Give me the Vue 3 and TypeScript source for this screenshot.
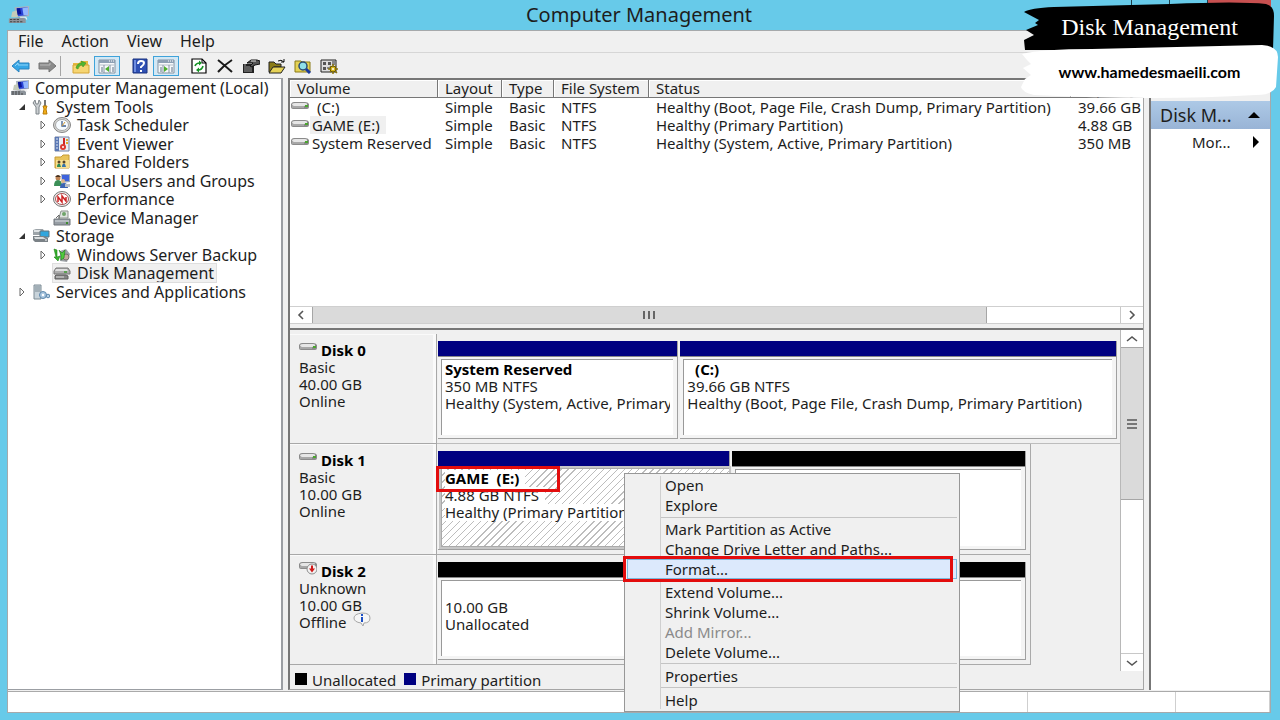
<script setup lang="ts">
interface TreeNode { label: string; level: number; icon: string; state?: 'open' | 'closed'; selected?: boolean }
interface Volume { name: string; status: string; capacity: string; selected?: boolean; indent?: boolean }
interface Part { grow: number; kind: 'primary' | 'free'; title?: string; lines: string[]; hatched?: boolean }
interface Disk { name: string; icon: string; info: string[]; span: number; notice?: boolean; parts: Part[] }
interface Tool { icon: string; label: string; on?: boolean; sep?: boolean; space?: boolean }

const computer =
  '<path d="M5 1l13-1v9l-12 1z" fill="#a9b4bf"/><path d="M7 2l10-1v7l-9 1z" fill="#2b46d8"/><path d="M12 2l5-1v7l-4 0z" fill="#93b7ff"/><path d="M7 2l3 0 1 5-4 1z" fill="#0a1596"/><path d="M3 5l4-1 1 6H2z" fill="#c4cbb9"/><path d="M0 11l13-1 2 2v3H0z" fill="#8d949b"/><path d="M1 12h9M1 14h12" stroke="#444" stroke-width="1" stroke-dasharray="2 1"/><path d="M10 10h5l1 2" stroke="#eee" fill="none"/>'
const drive =
  '<path d="M0 6q1-2 3-2h11q3 0 4 2v3q0 2-2 2H2q-2 0-2-2z" fill="#8b8b8b"/><path d="M1 6q1-1 3-1h10q2 0 2 1v1q-1 1-3 1H3q-2 0-2-2z" fill="#e6e6e6"/><path d="M1 9h12" stroke="#c4c4c4"/><rect x="14" y="7" width="3" height="2" fill="#4aa52e"/>'
const panel = (arrow: string) =>
  `<path d="M1 2h16v13H1z" fill="#f7f9fb" stroke="#8593a2"/><path d="M1 2h16v3H1z" fill="#8da0b4"/><path d="M11 3h1M13 3h1M15 3h1" stroke="#fff"/><path d="M2 7h14" stroke="#b5bfca"/><path d="M3 9h2v5H3zM14 9h2v5h-2z" fill="#aab5c1"/><path d="M6 7v8M12 7v8" stroke="#8593a2"/>${arrow}`

const icons: Record<string, string> = {
  computer,
  drive,
  back: '<path d="M0 8l7-6v3h10v6H7v3z" fill="#35a6e6" stroke="#2b82bd"/><path d="M3 8l3-3v2h10" fill="none" stroke="#8ed4f8"/>',
  forward: '<path d="M18 8l-7-6v3H1v6h10v3z" fill="#8b8b8b" stroke="#747474"/><path d="M2 7h10V5" fill="none" stroke="#b9b9b9"/>',
  up: '<path d="M1 5h6l2-2h7v12H1z" fill="#e7b93f"/><path d="M1 7h16v8H1z" fill="#f6d572" stroke="#d5a537"/><path d="M4 10q1-5 6-5l-1-2 5 2-3 4-1-2q-3 0-4 4z" fill="#51b732" stroke="#2f8c1c" stroke-width=".5"/>',
  panelLeft: panel('<path d="M11 8v6l-4-3z" fill="#4caf2c"/>'),
  panelRight: panel('<path d="M7 8v6l4-3z" fill="#4caf2c"/>'),
  help: '<path d="M2 1h14v14H2z" fill="#2f50b4" stroke="#19307e"/><path d="M3 2h2v12H3z" fill="#6e8de0"/><path d="M7 6q0-3 3-3t3 2q0 2-3 4v1M10 12v2" fill="none" stroke="#fff" stroke-width="2"/>',
  refresh: '<path d="M2 1h10l4 4v10H2z" fill="#fff" stroke="#000" stroke-width="1.2"/><path d="M12 1v4h4" fill="none" stroke="#000"/><path d="M5 8q1-3 5-3M13 8q-1 4-5 4" fill="none" stroke="#159425" stroke-width="1.6"/><path d="M9 2.500l3 2.500-3 2.500zM9 9.500l-3 2.500 3 2.500z" fill="#159425"/>',
  cross: '<path d="M2 2q5 4 14 12M16 2q-8 5-14 12" fill="none" stroke="#1a1a1a" stroke-width="2"/>',
  properties: '<path d="M1 6h11v9H1z" fill="#222"/><path d="M2 7h2M2 9h8M2 11h8M2 13h8" stroke="#999"/><path d="M5 5l4-3h6l3 1v3l-5 1-3 2-2-1 3-3H7z" fill="#555" stroke="#111"/><path d="M9 3h5" stroke="#ddd"/>',
  open: '<path d="M1 4h5l2 2h5v3H6l-4 5H1z" fill="#8a7b16" stroke="#222"/><path d="M5 9h12l-4 6H1z" fill="#e6d257" stroke="#222"/><path d="M10 3q3-2 6 1M16 1v3h-3" fill="none" stroke="#111"/>',
  search: '<path d="M1 3h6l1 1h8v10H1z" fill="#e5d255" stroke="#8a7b16"/><circle cx="9" cy="8" r="4" fill="#8fe0ea" stroke="#2c4d74" stroke-width="1.5"/><path d="M12 11l4 4" stroke="#183a9d" stroke-width="3"/>',
  settings: '<path d="M1 2h15v12H1z" fill="#ddd" stroke="#222"/><path d="M3 4h3v3H3zM3 9h3v3H3zM8 4h3v3H8z" fill="#555"/><path d="M12 4h3M12 6h3M7 10h3" stroke="#333"/><circle cx="13" cy="11" r="3" fill="#d8b81c" stroke="#5d4e08"/><path d="M13 6v2M13 14v2M8 11h2M16 11h2M10 8l1 1M15 13l2 2M16 8l-1 1M10 14l1-1" stroke="#8a760d" stroke-width="1.5"/><circle cx="13" cy="11" r="1" fill="#fff"/>',
  tools: '<path d="M3 1l1 4 2 0 1-4 2 3-2 4v7H4V8L1 4z" fill="#ccd0d3" stroke="#7d8488"/><path d="M12 1h2v6h-2z" fill="#777"/><path d="M11 7h4l-1 3 1 5h-4l1-5z" fill="#f1ae18" stroke="#bb7c05"/>',
  clock: '<ellipse cx="9" cy="8" rx="8.500" ry="7.500" fill="#d5d5d2" stroke="#858585"/><ellipse cx="9" cy="8" rx="6.500" ry="5.500" fill="#f6fbff" stroke="#a8a8a8"/><path d="M9 4v5h4" fill="none" stroke="#3f5f8e" stroke-width="1.3"/><path d="M9 9l3-4" stroke="#d79b34"/>',
  event: '<path d="M2 1h14v14H2z" fill="#e8edf3" stroke="#7281a2"/><path d="M2 1h4v14H2z" fill="#5b78b4"/><path d="M3 3h2M3 6h2M3 9h2M3 12h2" stroke="#dfe7f5"/><path d="M11 2v7" stroke="#d02525" stroke-width="2"/><circle cx="10" cy="11" r="3" fill="#dd3a31"/><circle cx="10" cy="11" r="1" fill="#fff"/><path d="M13 4h2M13 7h2" stroke="#e0a92b" stroke-width="2"/>',
  shared: '<path d="M2 3h6l2-2h6v13H2z" fill="#e9c45a" stroke="#c69a35"/><path d="M3 6h13v8H3z" fill="#f8df90"/><circle cx="6" cy="8" r="1.5" fill="#5a4627"/><path d="M4 13q0-4 3-3l1 3z" fill="#2e8d56"/><circle cx="11" cy="8" r="1.5" fill="#5a4627"/><path d="M9 13q0-4 3-3l1 3z" fill="#3573ac"/>',
  users: '<path d="M8 1l9 0v8l-8 1z" fill="#9ba8bd"/><path d="M9 2h7v6H9z" fill="#3e63dc"/><circle cx="5" cy="5" r="2.5" fill="#bd8455"/><path d="M2 4q3-4 6 0" fill="#4b321d"/><path d="M1 13q0-6 4-6t4 6z" fill="#3b8f57"/><circle cx="10" cy="8" r="2" fill="#e0b58b"/><path d="M7 15q0-5 4-5t4 5z" fill="#3c64b3"/><path d="M12 11h5v3h-5z" fill="#b9bec6"/>',
  perf: '<ellipse cx="9" cy="8" rx="8.500" ry="7.500" fill="#ececec" stroke="#777"/><ellipse cx="9" cy="8" rx="6.500" ry="5.500" fill="#fff" stroke="#a55"/><path d="M5 11V6l4 5V5l4 5V6" fill="none" stroke="#cf2525" stroke-width="1.500"/>',
  device: '<path d="M1 9h16v6H1z" fill="#969da4" stroke="#6e757b"/><path d="M2 11h14" stroke="#d8dde1"/><path d="M8 1h7v7H6z" fill="#dfe3e0" stroke="#8b918d"/><circle cx="11" cy="4" r="2" fill="#6fa369"/><path d="M3 8l3-3v4" fill="none" stroke="#666"/><path d="M13 13h2" stroke="#3d8c30" stroke-width="2"/>',
  storage: '<path d="M1 2l3-1h7l1 2v4H1z" fill="#9ca3a8"/><path d="M2 2h7v2H2z" fill="#dee2e4"/><path d="M8 3h9v6H8z" fill="#32a6dd" stroke="#60747f"/><path d="M1 8h11l4 2v4H3l-2-2z" fill="#7b8287"/><path d="M2 9h9l3 2H3z" fill="#d8dcde"/><path d="M13 12h2" stroke="#fff"/>',
  backup: '<path d="M7 4l6-2 4 5-3 8-7-1z" fill="#9ca1a6"/><circle cx="13" cy="10" r="3" fill="#c4a7a1" stroke="#77706e"/><path d="M1 2l3 1v7l3-1-2 5-4-4 2 0z" fill="#34b32a" stroke="#207f19" stroke-width=".6"/><path d="M6 3l3 3 3-3-1 8-3 2V8z" fill="#50cb3e" stroke="#207f19" stroke-width=".6"/>',
  diskmgmt: '<path d="M3 3h12l2 3v3H1V6z" fill="#adadad" stroke="#777"/><path d="M3 4h11l1 2H2z" fill="#e0e0e0"/><path d="M3 10h10l2 1v3H2v-3z" fill="#858585" stroke="#5f5f5f"/><path d="M3 12h8" stroke="#ddd"/><path d="M11 7h3" stroke="#3f9d35" stroke-width="1.5"/>',
  services: '<path d="M2 1h7v14H2z" fill="#c8d3da" stroke="#7d8b94"/><path d="M3 3h5M3 5h5M3 7h5" stroke="#7d8b94"/><circle cx="11" cy="11" r="3.5" fill="#a9c6df" stroke="#5c87ac"/><circle cx="11" cy="11" r="1.2" fill="#fff"/><circle cx="16" cy="12" r="1.8" fill="#b6cfe3" stroke="#5c87ac"/>',
  driveOff:
    '<g transform="translate(0 -2)">' + drive + '</g><circle cx="13" cy="9" r="5" fill="#f2f2f2" stroke="#8d8d8d"/><path d="M13 5.500v4" stroke="#d01a1a" stroke-width="2"/><path d="M10 8.500h6l-3 4z" fill="#d01a1a"/>',
  info: '<path d="M9 1q8 0 8 5t-6 5l-1 3-2-3Q1 10 1 6t8-5z" fill="#f6f6f6" stroke="#a7a7a7"/><path d="M9 5v5" stroke="#1c4fc4" stroke-width="2"/><path d="M9 2v2" stroke="#1c4fc4" stroke-width="2"/>',
}

const tools: Tool[] = [
  { icon: 'back', label: 'Back' },
  { icon: 'forward', label: 'Forward', sep: true },
  { icon: 'up', label: 'Up one level' },
  { icon: 'panelLeft', label: 'Show or hide console tree', on: true, space: true },
  { icon: 'help', label: 'Help' },
  { icon: 'panelRight', label: 'Show or hide action pane', on: true, space: true },
  { icon: 'refresh', label: 'Refresh' },
  { icon: 'cross', label: 'Delete' },
  { icon: 'properties', label: 'Properties' },
  { icon: 'open', label: 'Open' },
  { icon: 'search', label: 'Explore' },
  { icon: 'settings', label: 'Settings' },
]

const tree: TreeNode[] = [
  { label: 'Computer Management (Local)', level: 0, icon: 'computer' },
  { label: 'System Tools', level: 1, icon: 'tools', state: 'open' },
  { label: 'Task Scheduler', level: 2, icon: 'clock', state: 'closed' },
  { label: 'Event Viewer', level: 2, icon: 'event', state: 'closed' },
  { label: 'Shared Folders', level: 2, icon: 'shared', state: 'closed' },
  { label: 'Local Users and Groups', level: 2, icon: 'users', state: 'closed' },
  { label: 'Performance', level: 2, icon: 'perf', state: 'closed' },
  { label: 'Device Manager', level: 2, icon: 'device' },
  { label: 'Storage', level: 1, icon: 'storage', state: 'open' },
  { label: 'Windows Server Backup', level: 2, icon: 'backup', state: 'closed' },
  { label: 'Disk Management', level: 2, icon: 'diskmgmt', selected: true },
  { label: 'Services and Applications', level: 1, icon: 'services', state: 'closed' },
]

const volumes: Volume[] = [
  { name: '(C:)', indent: true, status: 'Healthy (Boot, Page File, Crash Dump, Primary Partition)', capacity: '39.66 GB' },
  { name: 'GAME (E:)', selected: true, status: 'Healthy (Primary Partition)', capacity: '4.88 GB' },
  { name: 'System Reserved', status: 'Healthy (System, Active, Primary Partition)', capacity: '350 MB' },
]

const disks: Disk[] = [
  {
    name: 'Disk 0', icon: 'drive', info: ['Basic', '40.00 GB', 'Online'], span: 100,
    parts: [
      { grow: 240, kind: 'primary', title: 'System Reserved', lines: ['350 MB NTFS', 'Healthy (System, Active, Primary Partition)'] },
      { grow: 437, kind: 'primary', title: '\u00a0\u00a0(C:)', lines: ['39.66 GB NTFS', 'Healthy (Boot, Page File, Crash Dump, Primary Partition)'] },
    ],
  },
  {
    name: 'Disk 1', icon: 'drive', info: ['Basic', '10.00 GB', 'Online'], span: 87.4,
    parts: [
      { grow: 292, kind: 'primary', title: 'GAME\u00a0 (E:)', hatched: true, lines: ['4.88 GB NTFS', 'Healthy (Primary Partition)'] },
      { grow: 295, kind: 'free', lines: [] },
    ],
  },
  {
    name: 'Disk 2', icon: 'driveOff', info: ['Unknown', '10.00 GB', 'Offline'], span: 87.4, notice: true,
    parts: [{ grow: 1, kind: 'free', title: '\u00a0', lines: ['10.00 GB', 'Unallocated'] }],
  },
]

const menuGroups: string[][] = [
  ['Open', 'Explore'],
  ['Mark Partition as Active', 'Change Drive Letter and Paths...', 'Format...'],
  ['Extend Volume...', 'Shrink Volume...', 'Add Mirror...', 'Delete Volume...'],
  ['Properties'],
  ['Help'],
]
</script>

<template>
  <div class="desktop">
    <header class="titlebar">
      <svg class="icon app" viewBox="0 0 18 16" v-html="icons.computer" />
      <h1>Computer Management</h1>
      <div class="controls">
        <button aria-label="Minimize" />
        <button aria-label="Maximize" />
        <button class="close" aria-label="Close" />
      </div>
    </header>

    <div class="window">
      <nav class="menubar">
        <button v-for="m in ['File', 'Action', 'View', 'Help']" :key="m">{{ m }}</button>
      </nav>
      <div class="toolbar">
        <button v-for="t in tools" :key="t.icon" :class="{ on: t.on, sep: t.sep, space: t.space }" :aria-label="t.label">
          <svg class="icon" viewBox="0 0 18 16" v-html="icons[t.icon]" />
        </button>
      </div>

      <main class="body">
        <aside class="tree">
          <ul>
            <li v-for="n in tree" :key="n.label" :class="'level' + n.level">
              <svg v-if="n.level" class="twist" viewBox="0 0 12 12">
                <path v-if="n.state === 'open'" d="M9 3v6H3z" fill="#333" />
                <path v-else-if="n.state === 'closed'" d="M4 2l4 4-4 4z" fill="#fff" stroke="#666" />
              </svg>
              <button :class="{ selected: n.selected }">
                <svg class="icon" viewBox="0 0 18 16" v-html="icons[n.icon]" />
                <span>{{ n.label }}</span>
              </button>
            </li>
          </ul>
        </aside>

        <section class="center">
          <div class="volumes">
            <table>
              <colgroup>
                <col class="c-volume" /><col class="c-layout" /><col class="c-type" />
                <col class="c-fs" /><col class="c-status" /><col />
              </colgroup>
              <thead>
                <tr>
                  <th>Volume</th><th>Layout</th><th>Type</th><th>File System</th><th>Status</th><th>Capacity</th>
                </tr>
              </thead>
              <tbody>
                <tr v-for="v in volumes" :key="v.name">
                  <td class="name">
                    <div>
                      <svg class="icon" viewBox="0 0 18 16" v-html="icons.drive" />
                      <span :class="{ picked: v.selected, indent: v.indent }">{{ v.name }}</span>
                    </div>
                  </td>
                  <td>Simple</td><td>Basic</td><td>NTFS</td><td>{{ v.status }}</td><td>{{ v.capacity }}</td>
                </tr>
              </tbody>
            </table>
          </div>
          <div class="hscroll">
            <button aria-label="Scroll left"><svg viewBox="0 0 12 12"><path d="M8 2L4 6l4 4" /></svg></button>
            <div class="htrack"><div class="hthumb"><i /><i /><i /></div></div>
            <button aria-label="Scroll right"><svg viewBox="0 0 12 12"><path d="M4 2l4 4-4 4" /></svg></button>
          </div>

          <div class="graphic">
            <div class="disks">
              <div v-for="d in disks" :key="d.name" class="disk">
                <div class="diskinfo">
                  <strong><svg class="icon" viewBox="0 0 18 16" v-html="icons[d.icon]" />{{ d.name }}</strong>
                  <span v-for="(line, i) in d.info" :key="line">
                    {{ line }}
                    <svg v-if="d.notice && i === 2" class="icon note" viewBox="0 0 18 16" v-html="icons.info" />
                  </span>
                </div>
                <div class="lane">
                  <div class="parts" :class="{ framed: d.span < 100 }" :style="{ width: d.span + '%' }">
                    <div v-for="(p, i) in d.parts" :key="i" class="part" :class="p.kind" :style="{ flexGrow: p.grow }">
                      <div class="bar" />
                      <div class="cell" :class="{ hatched: p.hatched }">
                        <div class="text">
                          <strong v-if="p.title"><span>{{ p.title }}</span></strong>
                          <p v-for="l in p.lines" :key="l"><span>{{ l }}</span></p>
                        </div>
                        <div v-if="p.hatched" class="mark name-mark" />
                      </div>
                    </div>
                  </div>
                </div>
              </div>
            </div>
            <div class="vscroll">
              <button aria-label="Scroll up"><svg viewBox="0 0 12 12"><path d="M1 8l5-4 5 4" /></svg></button>
              <div class="vtrack"><div class="vthumb"><i /><i /><i /></div></div>
              <button aria-label="Scroll down"><svg viewBox="0 0 12 12"><path d="M1 4l5 4 5-4" /></svg></button>
            </div>
          </div>
          <div class="legend">
            <i class="free" /><span>Unallocated</span><i class="primary" /><span>Primary partition</span>
          </div>
        </section>

        <aside class="actions">
          <h2>Actions</h2>
          <button class="group">Disk M...<svg viewBox="0 0 12 12"><path d="M0 9l6-6 6 6z" /></svg></button>
          <button class="more">Mor...<svg viewBox="0 0 12 12"><path d="M3 0l6 6-6 6z" /></svg></button>
        </aside>
      </main>
      <footer class="status"><span /><span /><span /></footer>
    </div>

    <div class="context" role="menu">
      <template v-for="(g, gi) in menuGroups" :key="gi">
        <div v-if="gi" class="rule" />
        <button v-for="m in g" :key="m" role="menuitem" :class="{ active: m === 'Format...' }" :disabled="m === 'Add Mirror...'">
          {{ m }}
          <span v-if="m === 'Format...'" class="mark item-mark" />
        </button>
      </template>
    </div>

    <div class="banner">
      <svg viewBox="0 0 260 100">
        <path d="M5 50l-1-10 10-5-8-5 12-5-3-2 4-3-15-8q6-4 30-5L150 4q70-3 96 0q8 2 8 12l-1 34q-60-4-110 0z" fill="#000" />
        <path d="M2 54q20-5 70-5l170-4q16 1 16 12l-2 30q-4 8-20 8-100 6-222 0-12-3-13-8l4-8 6-4-8-7 8-4-4-4z" fill="#fff" />
      </svg>
      <strong>Disk Management</strong>
      <a href="#">www.hamedesmaeili.com</a>
    </div>
  </div>
</template>

<style>
body { margin: 0; }
</style>

<style scoped>
* { box-sizing: border-box; }
.desktop {
  position: relative;
  display: flex;
  flex-direction: column;
  min-height: 100vh;
  padding: 0 9px 7px 7px;
  overflow: hidden;
  background: #67cae9;
  color: #1d1d1d;
  font: 15px/18px "Noto Sans", "Open Sans", sans-serif;
}
button { margin: 0; padding: 0; border: 0; background: none; color: inherit; font: inherit; text-align: left; }
svg { display: block; flex: none; }
.icon { width: 18px; height: 16px; }

.titlebar { display: grid; grid-template-columns: 1fr auto 1fr; align-items: center; height: 30px; }
.titlebar h1 { margin: 0; font-size: 20px; font-weight: 400; line-height: 30px; }
.app { width: 22px; height: 18px; margin-left: 1px; }
.controls { display: flex; justify-content: flex-end; align-self: start; }
.controls button { width: 38px; height: 20px; border-left: 1px solid #1d3d48; }
.controls .close { width: 64px; background: #c75050; }

.window { display: flex; flex: 1; flex-direction: column; border: 1px solid #a6a9ab; background: #f0f0f0; }
.menubar { display: flex; gap: 18px; padding: 0 10px; height: 22px; border-bottom: 1px solid #d6d6d6; font-size: 16px; }
.menubar button { line-height: 21px; }
.toolbar { display: flex; align-items: center; height: 25px; }
.toolbar button { display: flex; align-items: center; justify-content: center; width: 26px; height: 20px; }
.toolbar .on { border: 1px solid #3fa3da; background: #d3e8f5; }
.toolbar .space { margin-right: 7px; }
.toolbar .sep { position: relative; margin-right: 8px; }
.toolbar .sep::after { content: ""; position: absolute; top: 0; right: -1px; width: 1px; height: 20px; background: #a5a5a5; }

.body { display: grid; flex: 1; grid-template-columns: 275px minmax(0, 1fr) 121px; column-gap: 5px; padding-bottom: 1px; }
.tree { border: 1px solid #9b9ea3; border-left: 0; border-right-width: 2px; background: #fff; font-size: 16px; }
.tree ul { display: grid; grid-auto-rows: 1fr; height: 222px; margin: 0; padding: 0; list-style: none; }
.tree li { display: flex; align-items: center; gap: 4px; }
.level0 { padding-left: 3px; }
.level1 { padding-left: 8px; }
.level2 { padding-left: 29px; }
.twist { width: 12px; height: 12px; }
.tree button { display: flex; align-items: center; gap: 4px; height: 18px; padding-right: 2px; line-height: 18px; white-space: nowrap; }
.tree button span { padding-left: 2px; }
.tree .selected { background: #f0f0f0; outline: 1px solid #dedede; }

.center { display: flex; flex-direction: column; border: solid #a5a5a5; border-width: 2px 1px 1px 2px; border-top-color: #777; border-left-color: #777; }
.volumes { flex: 1; background: #fff; }
table { width: 100%; table-layout: fixed; border-collapse: separate; border-spacing: 0; }
.c-volume { width: 148px; }
.c-layout { width: 64px; }
.c-type { width: 52px; }
.c-fs { width: 95px; }
.c-status { width: 422px; }
th, td { padding: 0 0 0 7px; line-height: 18px; text-align: left; font-weight: 400; white-space: nowrap; }
th { border: solid #777; border-width: 0 1px 1px 0; background: #f0f0f0; box-shadow: inset 1px 1px #fff; line-height: 17px; }
.name { padding: 0 0 0 1px; }
.name div { display: flex; align-items: center; gap: 1px; }
.name .icon { margin-top: -2px; }
.name span { padding: 0 2px; }
.name .indent { padding-left: 7px; }
.name .picked { padding-right: 6px; background: #f0f0f0; }

.hscroll { display: flex; height: 18px; border: solid #cfcfcf; border-width: 1px 0; background: #fff; }
.hscroll button, .vscroll button { display: flex; flex: none; align-items: center; justify-content: center; }
.hscroll button { width: 22px; }
.hscroll svg, .vscroll svg { width: 12px; height: 12px; fill: none; stroke: #555; stroke-width: 1.6; }
.htrack { flex: 1; border-right: 1px solid #c8c8c8; }
.hthumb { display: flex; align-items: center; justify-content: center; gap: 3px; width: 83.5%; height: 16px; border: solid #a6a6a6; border-width: 0 1px; background: #dadada; }
.hthumb i { width: 2px; height: 8px; background: #666; }

.graphic { display: flex; flex: 0 0 343px; margin-top: 4px; border-top: 2px solid #777; }
.disks { display: flex; flex: 1; flex-direction: column; min-width: 0; padding: 4px 0 6px; }
.disk { display: flex; flex: 1; min-height: 0; }
.diskinfo { display: flex; flex: none; flex-direction: column; width: 147px; padding: 8px 0 0 9px; border: solid #a8a8a8; border-width: 0 1px 1px 0; box-shadow: inset -3px 1px #fafafa; line-height: 17px; }
.diskinfo strong { display: flex; gap: 4px; color: #000; }
.diskinfo strong .icon { margin-top: -3px; }
.diskinfo span { display: flex; gap: 6px; }
.note { margin-top: -2px; }
.lane { display: flex; flex: 1; min-width: 0; padding-right: 3px; border-bottom: 1px solid #bdbdbd; }
.disk + .disk .lane { border-bottom: 0; }
.parts { display: flex; gap: 2px; padding: 7px 0 4px 1px; }
.parts.framed { padding-right: 4px; border: solid #aaa; border-width: 0 1px 1px 0; }
.part { display: flex; flex: 1 1 0; flex-direction: column; min-width: 0; border: solid #a0a0a0; border-width: 0 1px 1px 0; background: #f4f4f4; }
.bar { flex: none; height: 16px; border-bottom: 1px solid #888; }
.primary .bar, .legend .primary { background: #000080; }
.free .bar, .legend .free { background: #000; }
.cell { position: relative; flex: 1; margin: 2px 4px 3px 3px; padding: 1px 3px; border: solid #999; border-width: 1px 0 0 1px; background: #fff; line-height: 17px; }
.text { overflow-x: clip; white-space: nowrap; }
.text strong { display: block; color: #000; }
.text p { margin: 0; }
.hatched { margin: 1px 0 2px 3px; border: 1px solid #aaa; border-right: 0; background: repeating-linear-gradient(135deg, #fff 0 4px, #bdbdbd 4px 5px); outline: 2px solid #c6c6c6; }
.hatched .text span { display: inline-block; padding-right: 6px; background: #fff; }
.mark { position: absolute; border: 3px solid #e30d0d; }
.name-mark { top: -3px; left: -6px; width: 124px; height: 26px; }

.vscroll { display: flex; flex: none; flex-direction: column; width: 23px; border-left: 1px solid #b8b8b8; background: #fff; }
.vscroll button { height: 17px; }
.vtrack { flex: 1; border-bottom: 1px solid #c8c8c8; }
.vthumb { display: flex; flex-direction: column; align-items: center; justify-content: center; gap: 2px; height: 50%; border: solid #a6a6a6; border-width: 1px 0; background: #dadada; }
.vthumb i { width: 10px; height: 2px; background: #777; }
.legend { display: flex; align-items: center; height: 18px; padding-left: 5px; }
.legend i { width: 12px; height: 12px; margin: -3px 5px 0 0; }
.legend span { margin-right: 8px; line-height: 18px; }

.actions { border-left: 2px solid #777; background: #fff; }
.actions h2 { height: 23px; margin: 0; padding-left: 9px; border-top: 1px solid #aaa; background: #f0f0f0; font-size: 15px; font-weight: 400; }
.actions button { display: flex; align-items: center; justify-content: space-between; width: 100%; }
.actions svg { width: 12px; height: 12px; fill: #000; }
.group { height: 28px; padding: 0 10px 0 9px; background: linear-gradient(#adc9e6, #99b4d6); font-size: 18px; }
.more { height: 26px; padding: 0 8px 0 41px; }

.status { display: flex; height: 21px; border-top: 1px solid #aaa; background: #fff; }
.status span { flex: 1; border-right: 1px solid #cfcfcf; }
.status span:nth-child(2) { flex: 0 0 148px; }
.status span:nth-child(3) { flex: 0 0 94px; }

.context { position: absolute; top: 473px; left: 624px; display: flex; flex-direction: column; width: 336px; height: 239px; padding: 2px 2px 1px; border: 1px solid #979797; background: #f0f0f0 linear-gradient(#cfcfcf, #cfcfcf) 35px 2px / 1px 233px no-repeat; }
.context button { position: relative; flex: 1; min-height: 0; padding-left: 38px; line-height: 19px; white-space: nowrap; }
.context button:disabled { color: #8a8a8a; }
.context .active { background: #dce9fc; box-shadow: inset 0 0 0 1px #7ab8dc; }
.rule { flex: none; height: 2px; margin: 0 0 2px 34px; border-bottom: 1px solid #c4c4c4; }
.active + .rule { border-color: transparent; }
.item-mark { top: -3px; left: -4px; width: 330px; height: 26px; }

.banner { position: absolute; top: 0; right: 0; display: flex; flex-direction: column; align-items: center; width: 260px; height: 100px; padding: 12px 1px 0 0; }
.banner svg { position: absolute; inset: 0; width: 260px; height: 100px; }
.banner strong, .banner a { position: relative; }
.banner strong { color: #fff; font: 24px/30px "Liberation Serif", serif; }
.banner a { margin-top: 19px; color: #000; font: bold 16px/22px Lato, sans-serif; text-decoration: none; }
</style>
